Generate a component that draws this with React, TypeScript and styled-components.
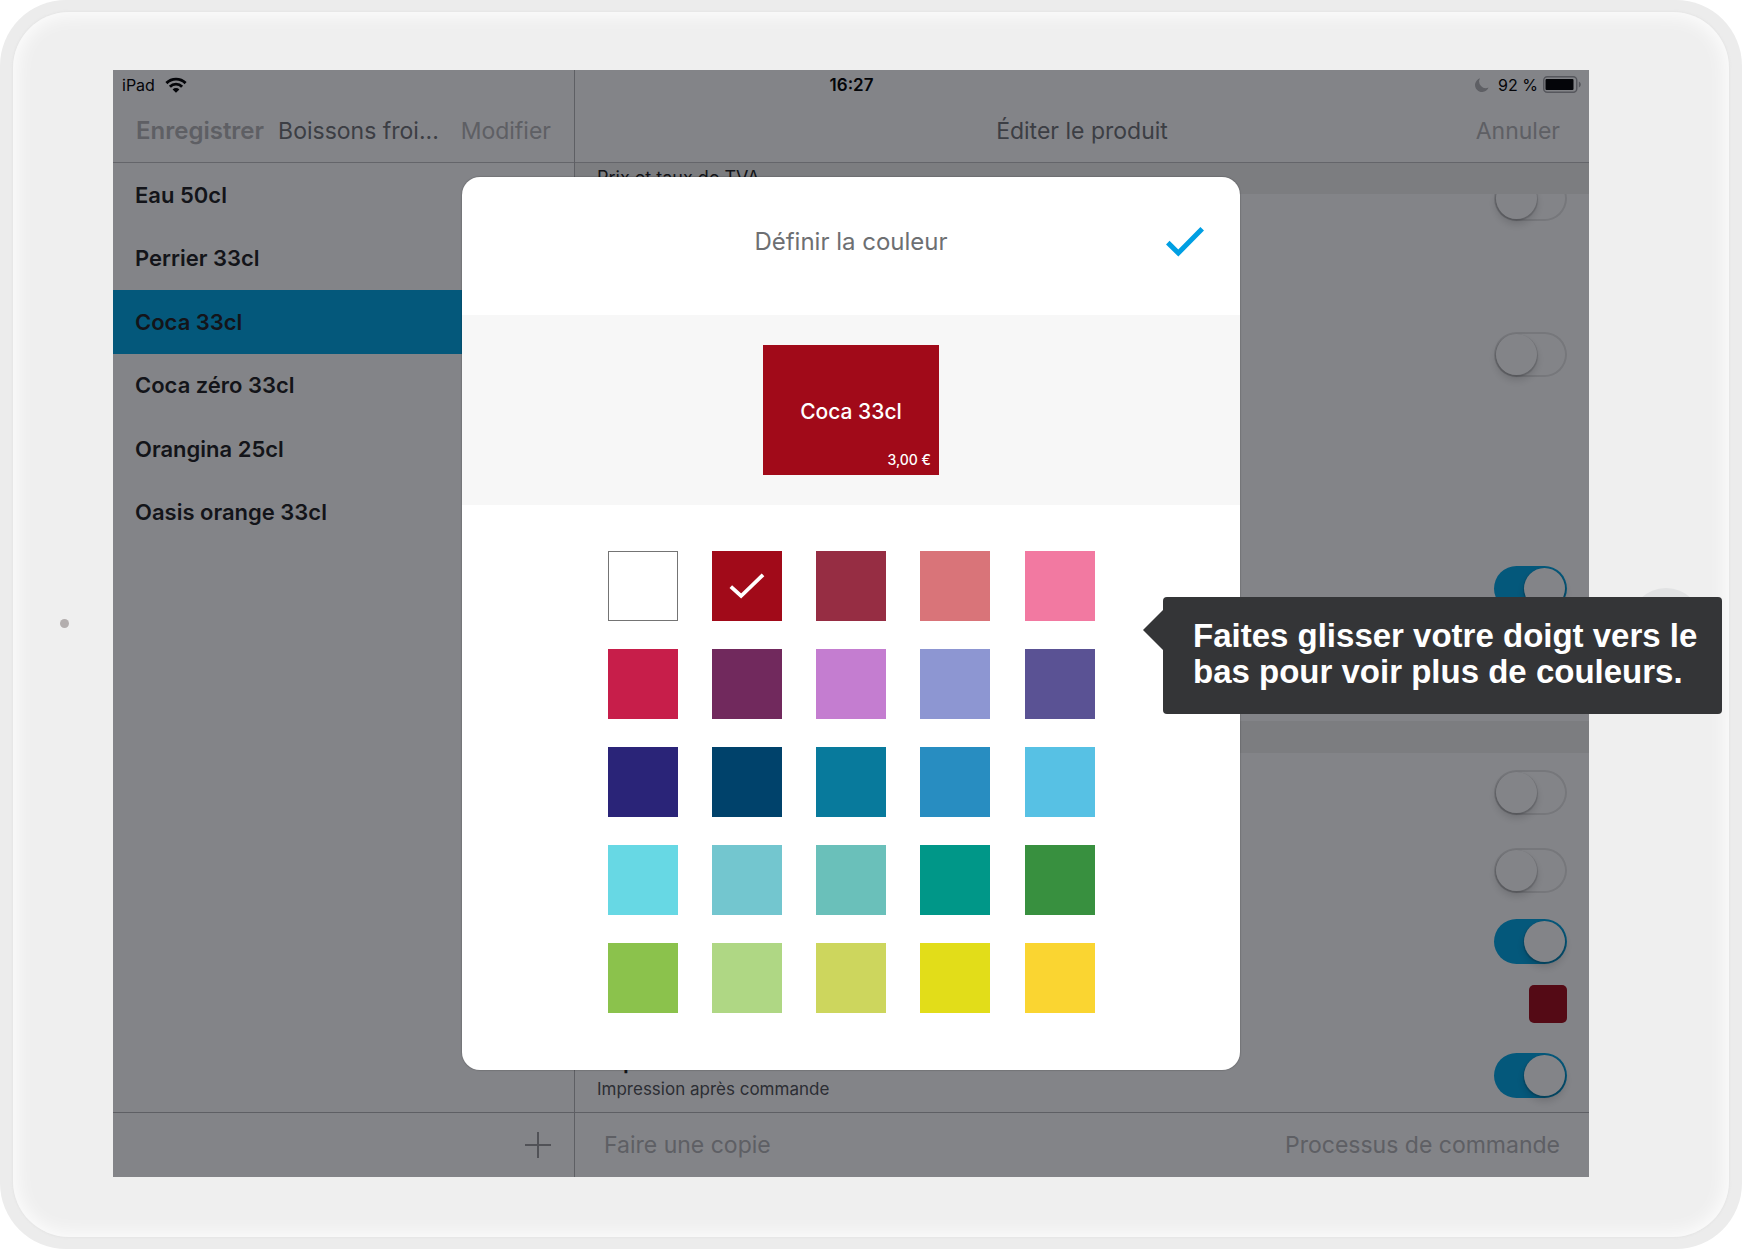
import React, { useState } from "react";
import styled, { createGlobalStyle } from "styled-components";

const UI_FONT = `Inter, "Liberation Sans", sans-serif`;

const GlobalStyle = createGlobalStyle`
  * { box-sizing: border-box; }
  body { margin: 0; background: #fff; font-family: ${UI_FONT}; }
  button, input { font: inherit; margin: 0; }
`;

/* ---------- tablet ---------- */

const Tablet = styled.div`
  display: flex;
  min-height: 100vh;
  padding: 12px 13px;
  border-radius: 66px;
  background: #ececec;
`;

const Face = styled.div`
  flex: 1;
  display: grid;
  grid-template-columns: 100px 1fr 140px;
  padding: 58px 0 60px;
  border-radius: 56px;
  background: #efefef;
  box-shadow: inset 0 0 20px 2px #fff, 0 0 2px 1px #e5e5e5;
`;

const Bezel = styled.div<{ $inset: number }>`
  display: flex;
  align-items: center;
  justify-content: center;
  padding-left: ${(p) => p.$inset}px;
`;

const Camera = styled.span`
  width: 9px;
  height: 9px;
  border-radius: 50%;
  background: #b3aeae;
`;

const HomeButton = styled.span`
  width: 72px;
  height: 72px;
  border-radius: 50%;
  background: #e1e2e3;
`;

const Screen = styled.div`
  position: relative;
  display: flex;
  background: #fff;
`;

/* ---------- status bar ---------- */

const StatusBar = styled.div`
  position: absolute;
  top: 0;
  left: 0;
  right: 0;
  display: grid;
  grid-template-columns: 1fr auto 1fr;
  align-items: center;
  height: 29px;
  padding: 0 8px 0 9px;
  font-size: 16px;
  color: #000;
`;

const StatusSide = styled.div<{ $end?: boolean }>`
  display: flex;
  align-items: center;
  justify-content: ${(p) => (p.$end ? "flex-end" : "flex-start")};
  gap: ${(p) => (p.$end ? "5px" : "10px")};
`;

const Clock = styled.time`
  font-size: 17px;
  font-weight: 600;
`;

const Moon = styled.svg`
  margin-right: 4px;
`;

/* ---------- columns ---------- */

const Sidebar = styled.section`
  flex: none;
  display: flex;
  flex-direction: column;
  width: 462px;
  border-right: 1px solid #b4b4b6;
`;

const Editor = styled.section`
  flex: 1;
  display: flex;
  flex-direction: column;
  min-width: 0;
`;

const NavBar = styled.header`
  display: flex;
  align-items: center;
  gap: 14px;
  height: 93px;
  padding: 29px 23px 0;
  border-bottom: 1px solid #c0c0c3;

  button:last-child {
    margin-left: auto;
  }
`;

const EditorNavBar = styled(NavBar)`
  display: grid;
  grid-template-columns: 1fr auto 1fr;
  padding: 29px 29px 0;

  button {
    justify-self: end;
    grid-column: 3;
  }
  h2 {
    grid-column: 2;
  }
`;

const NavTitle = styled.h2`
  margin: 0;
  font-size: 23px;
  font-weight: 400;
  line-height: 28px;
  white-space: nowrap;
  color: #707276;
`;

const TextButton = styled.button<{ $strong?: boolean }>`
  padding: 0;
  border: 0;
  background: none;
  font-size: ${(p) => (p.$strong ? "24px" : "23px")};
  font-weight: ${(p) => (p.$strong ? 600 : 400)};
  line-height: 28px;
  white-space: nowrap;
  color: #b4b4b6;
`;

const Footer = styled.footer<{ $end?: boolean }>`
  display: flex;
  align-items: center;
  justify-content: ${(p) => (p.$end ? "flex-end" : "space-between")};
  height: 65px;
  padding: 0 ${(p) => (p.$end ? "23px" : "29px")};
  border-top: 1px solid #b4b4b6;
`;

const IconButton = styled.button`
  display: flex;
  padding: 0;
  border: 0;
  background: none;
`;

const ProductList = styled.ul`
  display: grid;
  grid-auto-rows: 1fr;
  height: 381px;
  margin: 0 0 auto;
  padding: 0;
  list-style: none;
`;

const Product = styled.button<{ $selected: boolean }>`
  width: 100%;
  height: 100%;
  padding: 0 22px;
  border: 0;
  background: ${(p) => (p.$selected ? "#00a7e5" : "transparent")};
  font-size: 22px;
  font-weight: 600;
  text-align: left;
  color: #1f1f22;
`;

/* ---------- form ---------- */

const Form = styled.div`
  position: relative;
  flex: 1;
  display: flex;
  flex-direction: column;
  overflow: hidden;
`;

const SectionBand = styled.h3<{ $floating?: boolean }>`
  position: ${(p) => (p.$floating ? "absolute" : "static")};
  inset: 0 0 auto;
  height: ${(p) => (p.$floating ? "31px" : "32px")};
  margin: 0;
  padding: 0 22px;
  background: #f1f1ee;
  font-size: 18px;
  font-weight: 400;
  line-height: 30px;
  color: #1f1f22;
`;

/* The list is scrolled: its first and last rows run under the bars. */
const Scrolled = styled.div`
  flex: 1;
  display: flex;
  flex-direction: column;
  margin: -4px 0 -3px;
`;

const Row = styled.div<{ $height: number }>`
  display: flex;
  align-items: center;
  justify-content: space-between;
  height: ${(p) => p.$height}px;
  padding: 0 22px;
`;

const Caption = styled.label`
  display: flex;
  flex-direction: column;
  font-size: 22px;
  font-weight: 600;
  line-height: 28px;
  color: #1f1f22;
`;

const Hint = styled.small`
  font-size: 17px;
  font-weight: 400;
  line-height: 28px;
  color: #505256;
`;

const Switch = styled.input`
  appearance: none;
  flex: none;
  width: 73px;
  height: 45px;
  margin-left: auto;
  padding: 2px;
  border-radius: 23px;
  background: #fff;
  box-shadow: inset 0 0 0 2px #e4e4e4;

  &::before {
    content: "";
    display: block;
    width: 41px;
    height: 41px;
    border-radius: 50%;
    background: #fff;
    box-shadow: 0 1px 1px 1px rgba(0, 0, 0, 0.16), 0 5px 8px rgba(0, 0, 0, 0.16);
  }
  &:checked {
    background: #00a7e5;
    box-shadow: none;
  }
  &:checked::before {
    margin-left: 28px;
  }
`;

const ColorButton = styled.button`
  width: 38px;
  height: 38px;
  margin-left: auto;
  border: 0;
  border-radius: 5px;
  background: #a10a19;
`;

/* ---------- dialog ---------- */

const Scrim = styled.div`
  position: absolute;
  inset: 0;
  display: flex;
  align-items: center;
  justify-content: center;
  background: rgba(7, 9, 17, 0.5);
`;

const Dialog = styled.div`
  position: relative;
  width: 778px;
  border-radius: 18px;
  background: #fff;
  box-shadow: 0 0 1px 1px rgba(0, 0, 0, 0.12);
`;

const DialogHeader = styled.header`
  display: grid;
  grid-template-columns: 1fr auto 1fr;
  align-items: center;
  height: 138px;
  padding: 0 36px 8px;

  h2 {
    grid-column: 2;
    font-size: 24px;
    color: #6d6f72;
  }
  button {
    justify-self: end;
  }
`;

const Preview = styled.div`
  display: flex;
  align-items: center;
  justify-content: center;
  height: 190px;
  background: #f7f7f7;
`;

const Tile = styled.div<{ $color: string }>`
  display: grid;
  grid-template-rows: 1fr auto 1fr;
  width: 176px;
  height: 130px;
  padding: 8px 8px 4px;
  background: ${(p) => p.$color};
  color: #fff;
`;

const TileName = styled.strong`
  grid-row: 2;
  font-size: 21px;
  font-weight: 500;
  line-height: 28px;
  text-align: center;
`;

const TilePrice = styled.span`
  grid-row: 3;
  align-self: end;
  font-size: 14px;
  font-weight: 500;
  line-height: 22px;
  text-align: right;
`;

const Palette = styled.div`
  display: grid;
  grid-template-columns: repeat(5, 70px);
  justify-content: space-between;
  row-gap: 28px;
  width: 487px;
  margin: 0 auto;
  padding: 46px 0 57px;
`;

const Swatch = styled.label<{ $color: string }>`
  display: grid;
  place-items: center;
  height: 70px;
  border: ${(p) => (p.$color === "#ffffff" ? "1px solid #747474" : "0")};
  background: ${(p) => p.$color};

  input {
    grid-area: 1 / 1;
    appearance: none;
    width: 100%;
    height: 100%;
  }
  svg {
    grid-area: 1 / 1;
    pointer-events: none;
  }
`;

const Tooltip = styled.div`
  position: absolute;
  top: 420px;
  left: 701px;
  width: 559px;
  padding: 21px 20px 24px 30px;
  border-radius: 4px;
  background: #343537;
  font-family: "Liberation Sans", Arial, sans-serif;
  font-size: 33px;
  font-weight: 700;
  line-height: 36px;
  color: #fff;

  &::before {
    content: "";
    position: absolute;
    top: 13px;
    right: 100%;
    border: solid transparent;
    border-width: 20px 20px 20px 0;
    border-right-color: #343537;
  }
`;

const PRODUCTS = [
  "Eau 50cl",
  "Perrier 33cl",
  "Coca 33cl",
  "Coca zéro 33cl",
  "Orangina 25cl",
  "Oasis orange 33cl",
];

const COLORS = [
  "#ffffff", "#a10a19", "#962d43", "#d97479", "#f279a1",
  "#c71e4a", "#71295d", "#c47dd0", "#8d96d2", "#5a5294",
  "#2a2478", "#00426b", "#087a9c", "#288dc1", "#57c1e4",
  "#67d8e4", "#73c6cf", "#6ac0ba", "#009788", "#38903f",
  "#8bc24c", "#afd784", "#cdd65d", "#e2dd19", "#fad531",
];

export default function App() {
  const [color, setColor] = useState("#a10a19");
  const [product, setProduct] = useState("Coca 33cl");

  return (
    <>
      <GlobalStyle />
      <Tablet>
        <Face>
          <Bezel $inset={3}>
            <Camera />
          </Bezel>
          <Screen>
            <Sidebar>
              <NavBar>
                <TextButton $strong>Enregistrer</TextButton>
                <NavTitle>Boissons froi...</NavTitle>
                <TextButton>Modifier</TextButton>
              </NavBar>
              <ProductList>
                {PRODUCTS.map((name) => (
                  <li key={name}>
                    <Product $selected={name === product} onClick={() => setProduct(name)}>
                      {name}
                    </Product>
                  </li>
                ))}
              </ProductList>
              <Footer $end>
                <IconButton aria-label="Ajouter">
                  <svg width="26" height="26" viewBox="0 0 26 26" stroke="#9a9a9c" strokeWidth="2">
                    <path d="M13 0v26M0 13h26" />
                  </svg>
                </IconButton>
              </Footer>
            </Sidebar>

            <Editor>
              <EditorNavBar>
                <NavTitle>Éditer le produit</NavTitle>
                <TextButton>Annuler</TextButton>
              </EditorNavBar>
              <Form>
                <Scrolled>
                  <Row $height={78}><Switch type="checkbox" role="switch" aria-label="Prix libre" /></Row>
                  <Row $height={78} />
                  <Row $height={78}><Switch type="checkbox" role="switch" aria-label="Prix variable" /></Row>
                  <Row $height={78} />
                  <Row $height={78} />
                  <Row $height={78}><Switch type="checkbox" role="switch" aria-label="Remise" defaultChecked /></Row>
                  <Row $height={94} />
                  <SectionBand />
                  <Row $height={79}><Switch type="checkbox" role="switch" aria-label="Masquer" /></Row>
                  <Row $height={77}><Switch type="checkbox" role="switch" aria-label="Favori" /></Row>
                  <Row $height={64}><Switch type="checkbox" role="switch" aria-label="Disponible" defaultChecked /></Row>
                  <Row $height={62}><ColorButton aria-label="Couleur" /></Row>
                  <Row $height={80}>
                    <Caption htmlFor="print">
                      Imprimer
                      <Hint>Impression après commande</Hint>
                    </Caption>
                    <Switch id="print" type="checkbox" role="switch" defaultChecked />
                  </Row>
                </Scrolled>
                <SectionBand $floating>Prix et taux de TVA</SectionBand>
              </Form>
              <Footer>
                <TextButton>Faire une copie</TextButton>
                <TextButton>Processus de commande</TextButton>
              </Footer>
            </Editor>

            <StatusBar>
              <StatusSide>
                iPad
                <svg width="22" height="16" viewBox="0 0 22 16" aria-hidden="true">
                  <g fill="none" stroke="#000" strokeWidth="2.9">
                    <path d="M1.4 6.1a13.6 13.6 0 0 1 19.2 0" />
                    <path d="M4.9 9.7a8.6 8.6 0 0 1 12.2 0" />
                  </g>
                  <path d="M11 15.8 7.6 12.4a4.8 4.8 0 0 1 6.8 0z" />
                </svg>
              </StatusSide>
              <Clock>16:27</Clock>
              <StatusSide $end>
                <Moon width="14" height="14" viewBox="0 0 14 14" fill="#b4b4b6" aria-hidden="true">
                  <path d="M5 .3A7 7 0 1 0 13.6 9.4 6.6 6.6 0 0 1 5 .3z" />
                </Moon>
                92 %
                <svg width="38" height="17" viewBox="0 0 38 17" aria-hidden="true">
                  <rect x="0.75" y="0.75" width="33" height="15.5" rx="3.5" fill="none" stroke="#a4a4a8" strokeWidth="1.5" />
                  <rect x="2.5" y="3" width="28" height="11" rx="1" />
                  <path d="M35.8 5.6c2.6 1 2.6 4.8 0 5.8z" fill="#a4a4a8" />
                </svg>
              </StatusSide>
            </StatusBar>

            <Scrim>
              <Dialog role="dialog" aria-labelledby="dialog-title">
                <DialogHeader>
                  <NavTitle id="dialog-title">Définir la couleur</NavTitle>
                  <IconButton aria-label="Valider">
                    <svg width="38" height="30" viewBox="0 0 38 30" fill="none" stroke="#009fe3" strokeWidth="5">
                      <path d="M1.8 15.6 12.3 26 36.2 1.8" />
                    </svg>
                  </IconButton>
                </DialogHeader>
                <Preview>
                  <Tile $color={color}>
                    <TileName>{product}</TileName>
                    <TilePrice>3,00 €</TilePrice>
                  </Tile>
                </Preview>
                <Palette role="radiogroup" aria-labelledby="dialog-title">
                  {COLORS.map((c) => (
                    <Swatch key={c} $color={c}>
                      <input
                        type="radio"
                        name="color"
                        aria-label={c}
                        checked={c === color}
                        onChange={() => setColor(c)}
                      />
                      {c === color && (
                        <svg width="36" height="26" viewBox="0 0 36 26" fill="none" stroke="#fff" strokeWidth="3.8">
                          <path d="M1.8 13.6 12.1 23 34 1.8" />
                        </svg>
                      )}
                    </Swatch>
                  ))}
                </Palette>
                <Tooltip role="tooltip">Faites glisser votre doigt vers le bas pour voir plus de couleurs.</Tooltip>
              </Dialog>
            </Scrim>
          </Screen>
          <Bezel $inset={13}>
            <HomeButton />
          </Bezel>
        </Face>
      </Tablet>
    </>
  );
}
